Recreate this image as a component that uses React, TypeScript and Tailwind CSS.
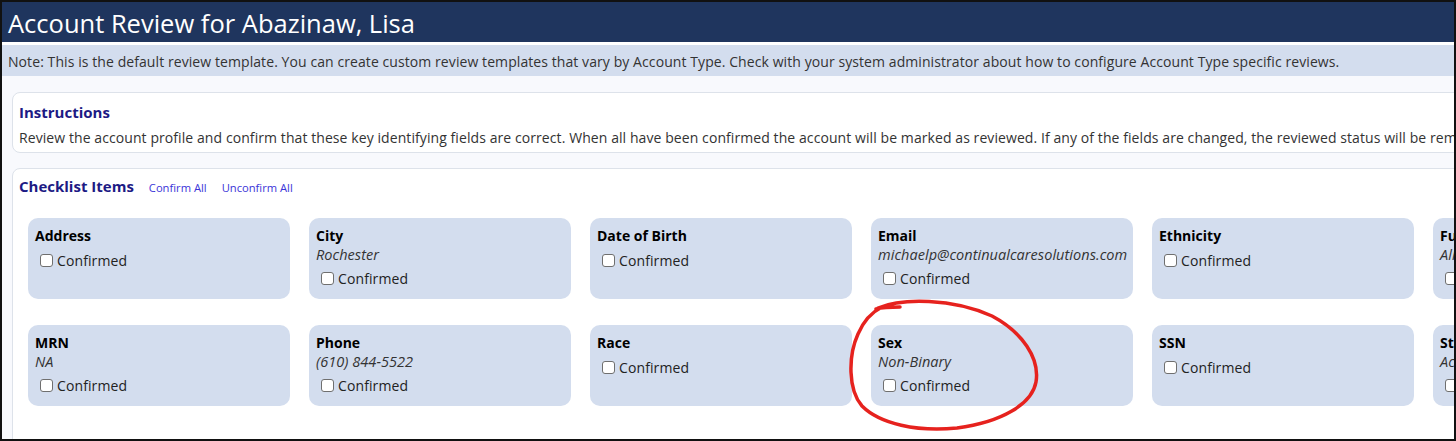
import React from 'react'

type Item = {
  label: string
  value?: string
}

const rowOne: Item[] = [
  { label: 'Address' },
  { label: 'City', value: 'Rochester' },
  { label: 'Date of Birth' },
  { label: 'Email', value: 'michaelp@continualcaresolutions.com' },
  { label: 'Ethnicity' },
  { label: 'Funding Source', value: 'Allegheny County' },
]

const rowTwo: Item[] = [
  { label: 'MRN', value: 'NA' },
  { label: 'Phone', value: '(610) 844-5522' },
  { label: 'Race' },
  { label: 'Sex', value: 'Non-Binary' },
  { label: 'SSN' },
  { label: 'Status', value: 'Active' },
]

const font = { fontFamily: '"Open Sans", "Noto Sans", sans-serif' }

function ChecklistCard({ item }: { item: Item }) {
  return (
    <div className="h-[81px] w-[262px] shrink-0 rounded-[10px] bg-[#d3ddee] px-[7px] pt-[8px]">
      <div className="text-[14px] font-bold leading-[20px] text-black">{item.label}</div>
      {item.value && (
        <div className="text-[14.5px] italic leading-[18px] tracking-[0.05px] text-[#333]">{item.value}</div>
      )}
      <label className="mt-[3px] flex items-center gap-[4px] pl-[5px] text-[14px] leading-[24px] tracking-[0.1px] text-[#222]">
        <span className="inline-block h-[13px] w-[13px] rounded-[3px] border border-[#6f6f6f] bg-white" />
        Confirmed
      </label>
    </div>
  )
}

export default function App() {
  return (
    <div className="relative h-[441px] w-[1456px] overflow-hidden border-2 border-[#111] bg-[#f8f9fd]" style={font}>
      <div className="w-[1800px]">
        <div className="h-[40px] bg-[#1f355e] pl-[6px] text-[25.5px] leading-[43px] text-white">
          Account Review for Abazinaw, Lisa
        </div>
        <div className="h-[3px] bg-white" />
        <div className="h-[31px] bg-[#d3ddee] pl-[6px] text-[14px] leading-[33px] tracking-[0.08px] text-[#333]">
          Note: This is the default review template. You can create custom review templates that vary by Account Type. Check with your system administrator about how to configure Account Type specific reviews.
        </div>

        <div className="px-[10px] pt-[16px]">
          <div className="h-[61px] rounded-lg border border-[#dde2ea] bg-white px-[6px] pt-[9px]">
            <div className="text-[15px] font-bold leading-[20px] text-[#1d1a84]">Instructions</div>
            <div className="mt-[6px] text-[14px] leading-[20px] tracking-[0.08px] text-[#333]">
              Review the account profile and confirm that these key identifying fields are correct. When all have been confirmed the account will be marked as reviewed. If any of the fields are changed, the reviewed status will be removed.
            </div>
          </div>

          <div className="mt-[15px] h-[300px] rounded-lg border border-[#dde2ea] bg-white px-[15px] pt-[7px]">
            <div className="-ml-[9px] flex items-baseline gap-[15px]">
              <span className="text-[15px] font-bold leading-[20px] text-[#1d1a84]">Checklist Items</span>
              <span className="text-[11.2px] text-[#3a34d8]">Confirm All</span>
              <span className="text-[11.2px] text-[#3a34d8]">Unconfirm All</span>
            </div>
            <div className="mt-[21px] flex flex-col gap-[26px]">
              <div className="flex gap-[19px]">
                {rowOne.map((item) => (
                  <ChecklistCard key={item.label} item={item} />
                ))}
              </div>
              <div className="flex gap-[19px]">
                {rowTwo.map((item) => (
                  <ChecklistCard key={item.label} item={item} />
                ))}
              </div>
            </div>
          </div>
        </div>
      </div>

      {/* hand-drawn red ring around the Sex card */}
      <svg className="pointer-events-none absolute left-0 top-0" width="1456" height="441">
        <path
          d="M874 307 C882 305 890 305 898 305 M876 306 C900 296 950 296 990 314 C1020 330 1038 356 1034 380 C1030 402 1000 420 955 426 C915 430 878 422 860 404 C846 388 846 354 856 332 C862 318 870 310 880 305"
          fill="none"
          stroke="#e6221e"
          strokeWidth="3.5"
          strokeLinecap="round"
          strokeLinejoin="round"
        />
      </svg>
    </div>
  )
}
